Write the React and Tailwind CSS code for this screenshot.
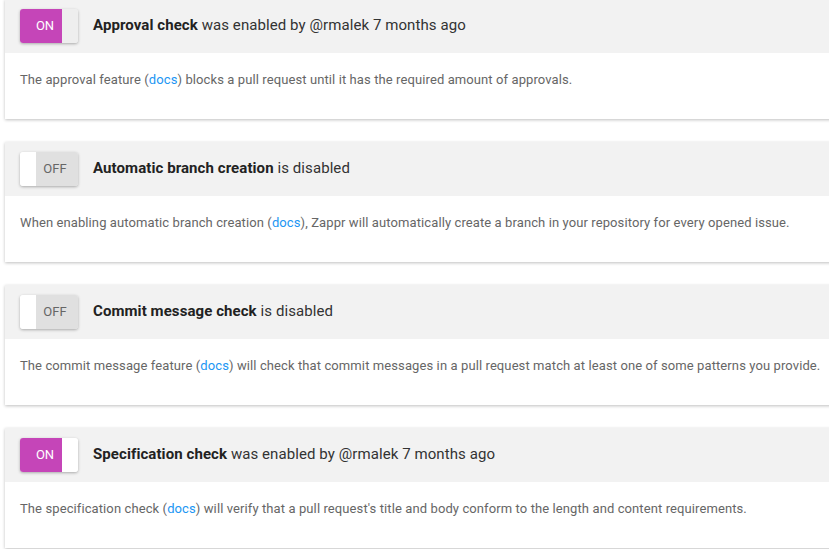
import React from "react";

const features = [
  {
    name: "Approval check",
    on: true,
    knob: "bg-[#eeeeee]",
    desc: "The approval feature (",
    rest: ") blocks a pull request until it has the required amount of approvals.",
  },
  {
    name: "Automatic branch creation",
    on: false,
    desc: "When enabling automatic branch creation (",
    rest: "), Zappr will automatically create a branch in your repository for every opened issue.",
  },
  {
    name: "Commit message check",
    on: false,
    desc: "The commit message feature (",
    rest: ") will check that commit messages in a pull request match at least one of some patterns you provide.",
  },
  {
    name: "Specification check",
    on: true,
    knob: "bg-white",
    desc: "The specification check (",
    rest: ") will verify that a pull request's title and body conform to the length and content requirements.",
  },
];

function Toggle({ on, knob }) {
  if (on) {
    return (
      <div className="flex h-[34px] w-[58px] shrink-0 overflow-hidden rounded-[3px] shadow-[0_1px_3px_rgba(0,0,0,0.3)]">
        <div className="flex flex-1 items-center justify-center bg-[#c545b8] pl-[8px] text-[13px] text-white">
          ON
        </div>
        <div className={`w-[16px] ${knob}`} />
      </div>
    );
  }
  return (
    <div className="flex h-[34px] w-[58px] shrink-0 overflow-hidden rounded-[3px] shadow-[0_1px_3px_rgba(0,0,0,0.3)]">
      <div className="w-[16px] bg-white" />
      <div className="flex flex-1 items-center justify-center bg-[#e0e0e0] pr-[4px] text-[13px] text-[#666]">
        OFF
      </div>
    </div>
  );
}

export default function App() {
  return (
    <div className="h-[549px] w-[829px] overflow-hidden bg-white font-['Roboto',sans-serif]">
      <div className="-mt-px flex w-[860px] flex-col gap-[23px] pl-[5px]">
        {features.map((f) => (
          <div
            key={f.name}
            className="h-[120px] bg-white shadow-[0_1px_3px_rgba(0,0,0,0.25)]"
          >
            {/* header */}
            <div className="flex h-[54px] items-center gap-[15px] bg-[#f2f2f2] px-[15px]">
              <Toggle on={f.on} knob={f.knob} />
              <div className="mb-[2px] text-[15px] tracking-[0.08px] text-[#333]">
                <span className="font-bold text-[#222]">{f.name}</span>{" "}
                {f.on ? "was enabled by @rmalek 7 months ago" : "is disabled"}
              </div>
            </div>
            {/* body */}
            <div className="px-[15px] pt-[18px] text-[13px] leading-[18px] tracking-[0.1px] text-[#666]">
              <p>
                {f.desc}
                <a className="text-[#2196f3]">docs</a>
                {f.rest}
              </p>
            </div>
          </div>
        ))}
      </div>
    </div>
  );
}
